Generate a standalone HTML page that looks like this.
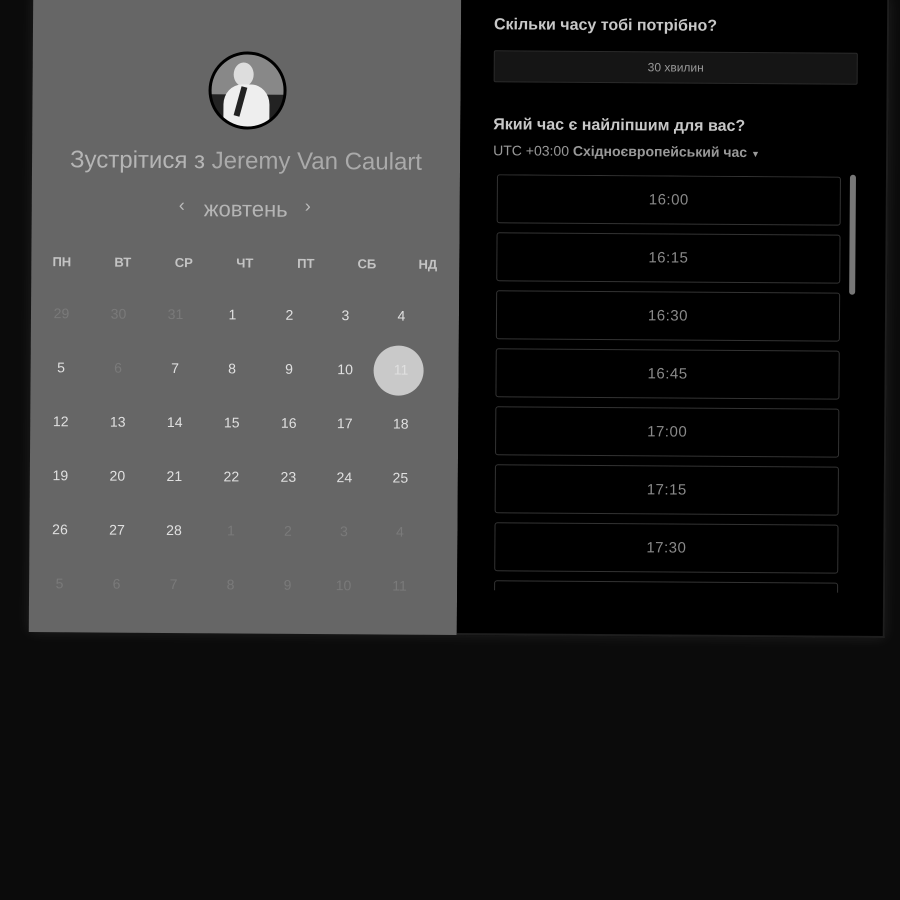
<!DOCTYPE html>
<html><head><meta charset="utf-8"><style>
*{box-sizing:border-box;margin:0;padding:0}
body{width:900px;height:900px;background:#0b0b0b;overflow:hidden;font-family:"Liberation Sans",sans-serif;position:relative}
#c{position:absolute;left:31px;top:-6px;width:856px;height:641px;transform:rotate(0.4deg);box-shadow:0 0 14px rgba(255,255,255,0.09);}
#l{position:absolute;left:0;top:0;width:428px;height:641px;background:#666}
#r{position:absolute;left:428px;top:0;width:428px;height:641px;background:#000;border-right:2px solid #1e1e1e;border-bottom:2px solid #1e1e1e}
.av{position:absolute;left:176px;top:59px;width:78px;height:78px;border-radius:50%;overflow:hidden;background:#222;border:3px solid #000}
.t{position:absolute;left:0;width:428px;text-align:center;color:#b5b5b5}
.wd{position:absolute;top:263px;width:61px;text-align:center;font-weight:bold;font-size:13px;color:#c4c4c4}
.d{position:absolute;width:57px;text-align:center;font-size:14px;color:#e0e0e0}
.d.o{color:#7a7a7a}
.sel{position:absolute;left:343px;top:352px;width:50px;height:50px;border-radius:50%;background:#c9c9c9}
.h{position:absolute;left:33px;font-weight:bold;font-size:16px;color:#c8c8c8}
.slot{position:absolute;left:37px;width:344px;height:49px;border:1px solid #333;border-radius:3px;text-align:center;line-height:47px;font-size:15px;color:#8a8a8a;letter-spacing:.5px}
</style></head><body>
<div id="c">
<div id="l">
<div class="av">
<div style="position:absolute;left:0;top:0;width:72px;height:40px;background:#888"></div>
<div style="position:absolute;left:22px;top:8px;width:20px;height:24px;border-radius:50%;background:#ddd"></div>
<div style="position:absolute;left:12px;top:30px;width:46px;height:50px;border-radius:40% 40% 0 0;background:#eee"></div>
<div style="position:absolute;left:26px;top:32px;width:6px;height:30px;background:#222;transform:rotate(15deg)"></div>
</div>
<div class="t" style="top:155px;font-size:24px">Зустрітися з <span style="color:#aaa">Jeremy Van Caulart</span></div>
<div class="t" style="top:204px;font-size:22px">жовтень</div>
<div style="position:absolute;left:147px;top:203px;color:#bbb;font-size:18px">‹</div>
<div style="position:absolute;left:273px;top:203px;color:#bbb;font-size:18px">›</div>
<div class="wd" style="left:0">ПН</div><div class="wd" style="left:61px">ВТ</div><div class="wd" style="left:122px">СР</div><div class="wd" style="left:183px">ЧТ</div><div class="wd" style="left:244px">ПТ</div><div class="wd" style="left:305px">СБ</div><div class="wd" style="left:366px">НД</div>
<div class="sel"></div>
<div id="days"></div>
</div>
<div id="r">
<div class="h" style="top:22px">Скільки часу тобі потрібно?</div>
<div style="position:absolute;left:33px;top:56px;width:364px;height:32px;background:#151515;border:1px solid #2a2a2a;border-radius:2px;text-align:center;line-height:30px;font-size:12px;color:#999">30 хвилин</div>
<div class="h" style="top:122px">Який час є найліпшим для вас?</div>
<div style="position:absolute;left:33px;top:148px;font-size:14px;color:#999">UTC +03:00 <b>Східноєвропейський час</b> <span style="font-size:9px">▼</span></div>
<div style="position:absolute;left:0;top:180px;width:428px;height:416px;overflow:hidden">
<div class="slot" style="top:0">16:00</div>
<div class="slot" style="top:58px">16:15</div>
<div class="slot" style="top:116px">16:30</div>
<div class="slot" style="top:174px">16:45</div>
<div class="slot" style="top:232px">17:00</div>
<div class="slot" style="top:290px">17:15</div>
<div class="slot" style="top:348px">17:30</div>
<div class="slot" style="top:406px">17:45</div>
</div>
<div style="position:absolute;left:390px;top:178px;width:6px;height:120px;border-radius:3px;background:#777"></div>
</div>
</div>
<script>
var xs=[0,57,114,171,228,284,340];
var rows=[[29,30,31,1,2,3,4],[5,6,7,8,9,10,11],[12,13,14,15,16,17,18],[19,20,21,22,23,24,25],[26,27,28,1,2,3,4],[5,6,7,8,9,10,11]];
var h='';rows.forEach(function(r,i){r.forEach(function(n,j){var o=(i==0&&j<3)||(i==1&&j==1)||(i==4&&j>2)||i==5;
h+='<div class="d'+(o?' o':'')+'" style="left:'+(2+xs[j])+'px;top:'+(314+i*54)+'px">'+n+'</div>';});});
document.getElementById('days').innerHTML=h;
</script>
</body></html>
